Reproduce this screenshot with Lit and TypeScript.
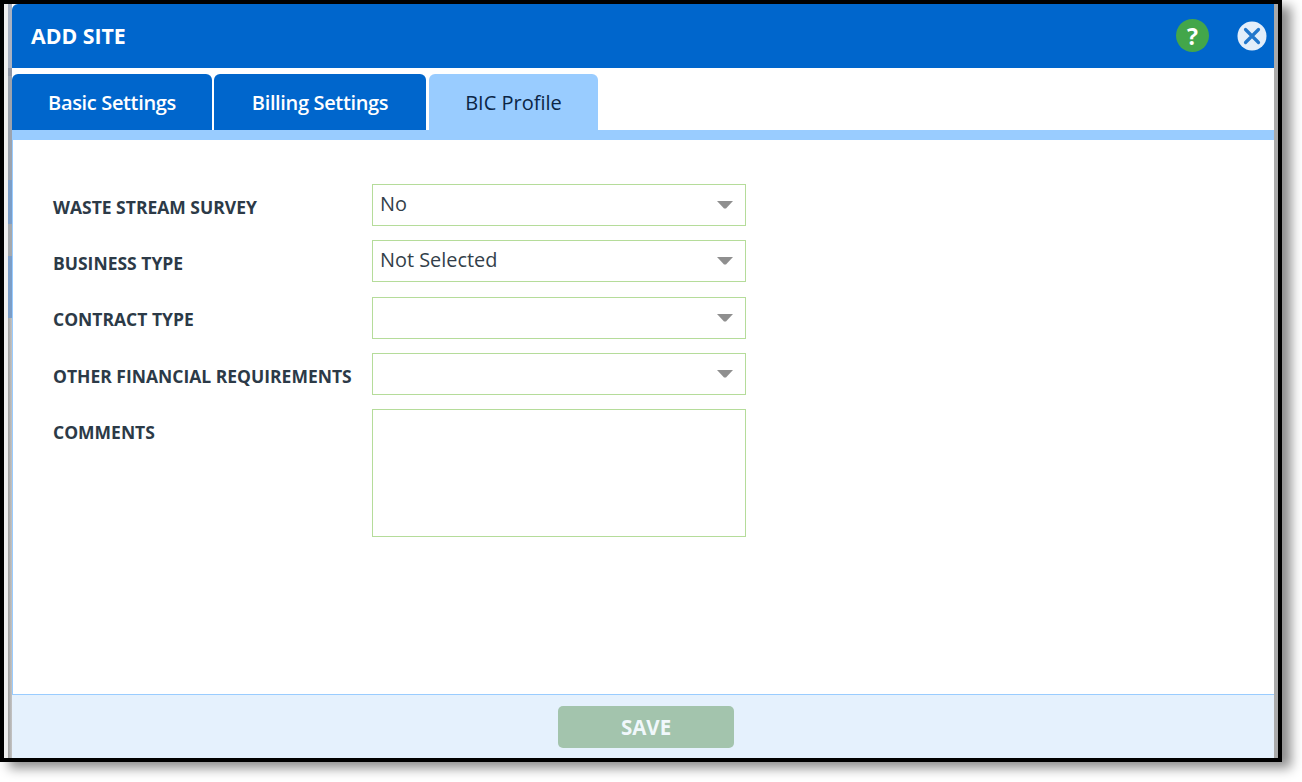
import { LitElement, html, css } from "lit";
import { customElement } from "lit/decorators.js";

const arrow = html`<svg class="arrow" width="16" height="8" viewBox="0 0 16 8"><path d="M0 0H16L9 7.5H7Z" fill="#8f8f8f"/></svg>`;

@customElement("app-root")
export class AppRoot extends LitElement {
  static styles = css`
    :host { display: block; width: 1302px; height: 782px; background: #fff; overflow: hidden; font-family: "Open Sans", "Noto Sans", sans-serif; }
    .shot { width: 1282px; height: 762px; box-sizing: border-box; border: 4px solid #000; background: #aaa; display: flex; box-shadow: 9px 6px 11px rgba(0,0,0,.45); }
    .light { width: 4px; flex: none; background: #efefef; }
    .strip { width: 4px; flex: none; display: flex; flex-direction: column; background: #a9a9a9; }
    .strip i { display: block; flex: none; }
    .s1 { height: 176px; background: linear-gradient(#a9b2c2 0 64px, #8e96a6 64px 72px, #9ca3ae 72px); }
    .s2 { height: 44px; background: #7b9dc7; }
    .s3 { height: 32px; background: #a5a8ac; }
    .s4 { height: 62px; background: #7b9dc7; }
    .s5 { flex: 1 !important; background: linear-gradient(90deg, #a0a0a0, #c4c4c4); }
    .side-r { width: 4px; flex: none; background: #aaa; }
    .panel { flex: 1; min-width: 0; display: flex; flex-direction: column; background: #fff; }
    .head { height: 64px; flex: none; box-sizing: border-box; background: #0066cc; border-top-left-radius: 6px; display: flex; align-items: center; padding: 0 7px 1px 19px; color: #fff; }
    .title { font-size: 21.3px; font-weight: 700; flex: 1; }
    .help { width: 33px; height: 33px; border-radius: 50%; background: #43a64a; color: #fff; display: flex; align-items: center; justify-content: center; font-size: 23px; font-weight: 700; margin-right: 28px; }
    .close { display: block; }
    .tabs { height: 62px; box-sizing: border-box; flex: none; padding-top: 6px; display: flex; gap: 2px; background: #fff; }
    .tab { height: 56px; box-sizing: border-box; border-radius: 6px 6px 0 0; background: #0066cc; color: #fff; font-size: 20px; font-weight: 600; display: flex; align-items: center; justify-content: center; letter-spacing: -.35px; }
    .tab.t1 { width: 200px; }
    .tab.t2 { width: 212px; }
    .tab.t3 { width: 169px; margin-left: 1px; background: #99ccff; color: #0b2545; font-weight: 500; letter-spacing: 0; }
    .rule { height: 10px; flex: none; background: #99ccff; }
    .body { flex: 1; box-sizing: border-box; border-left: 1px solid #99ccff; padding: 44px 0 0 40px; display: grid; grid-template-columns: 319px 374px; grid-auto-rows: 42px; row-gap: 14.33px; align-content: start; background: #fff; }
    .label { font-size: 17.5px; font-weight: 700; color: #2c3a47; padding-top: 10.6px; line-height: 24px; white-space: nowrap; }
    .field { box-sizing: border-box; height: 42px; border: 1px solid #b5dc9a; display: flex; align-items: center; justify-content: space-between; padding: 0 12px 4px 7px; font-size: 19.9px; font-weight: 500; color: #333f4a; background: #fff; }
    .arrow { margin-top: 4px; }
    .area { height: 128px; }
    .foot { height: 64px; flex: none; box-sizing: border-box; border-top: 1px solid #99ccff; background: #e5f1fd; display: flex; justify-content: center; align-items: flex-start; padding-top: 11px; padding-left: 6px; }
    .save { width: 176px; height: 42px; box-sizing: border-box; padding-bottom: 1px; border-radius: 5px; background: #a3c4ad; color: #f1f8fc; font-size: 20.5px; font-weight: 700; display: flex; align-items: center; justify-content: center; }
  `;

  render() {
    const rows: [string, string][] = [
      ["WASTE STREAM SURVEY", "No"],
      ["BUSINESS TYPE", "Not Selected"],
      ["CONTRACT TYPE", ""],
      ["OTHER FINANCIAL REQUIREMENTS", ""],
    ];
    return html`
      <div class="shot">
        <div class="light"></div>
        <div class="strip"><i class="s1"></i><i class="s2"></i><i class="s3"></i><i class="s4"></i><i class="s5"></i></div>
        <div class="panel">
          <div class="head">
            <div class="title">ADD SITE</div>
            <div class="help">?</div>
            <svg class="close" width="30" height="30" viewBox="0 0 30 30">
              <circle cx="15" cy="15" r="14.5" fill="#e3eefa"/>
              <path d="M8.5 8.5L21.5 21.5M21.5 8.5L8.5 21.5" stroke="#2277cc" stroke-width="3.2" stroke-linecap="round"/>
            </svg>
          </div>
          <div class="tabs">
            <div class="tab t1">Basic Settings</div>
            <div class="tab t2">Billing Settings</div>
            <div class="tab t3">BIC Profile</div>
          </div>
          <div class="rule"></div>
          <div class="body">
            ${rows.map(([l, v]) => html`<div class="label">${l}</div><div class="field"><span>${v}</span>${arrow}</div>`)}
            <div class="label">COMMENTS</div><div class="field area"></div>
          </div>
          <div class="foot"><div class="save">SAVE</div></div>
        </div>
        <div class="side-r"></div>
      </div>
    `;
  }
}
